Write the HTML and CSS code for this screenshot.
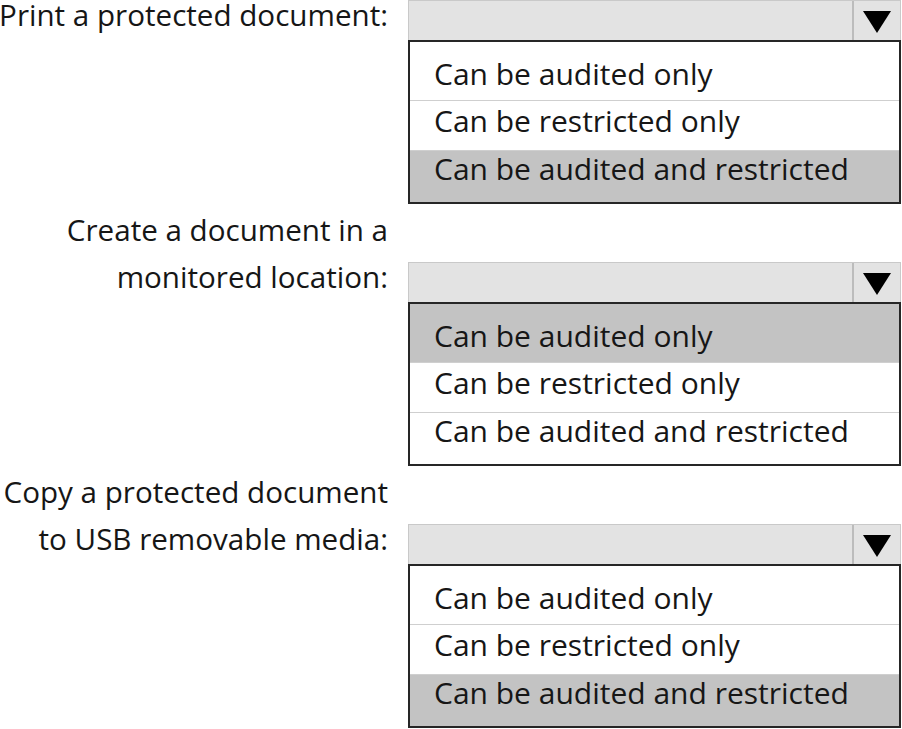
FILE: index.html
```html
<!DOCTYPE html>
<html lang="en">
<head>
    <meta charset="UTF-8">
    <meta name="viewport" content="width=device-width, initial-scale=1.0">
    <title>Endpoint DLP actions</title>
    <link rel="stylesheet" href="styles.css">
</head>
<body>

<div class="form">
    <div class="question">
        <div class="question-label">
            <span>Print a protected document:</span>
        </div>
        <div class="select">
            <span class="select-value"></span>
            <span class="select-arrow">
                <svg width="28" height="22" viewBox="0 0 28 22"><polygon points="0,0 28,0 14,22" fill="#000"/></svg>
            </span>
        </div>
        <ul class="options">
            <li class="option">Can be audited only</li>
            <li class="option">Can be restricted only</li>
            <li class="option selected">Can be audited and restricted</li>
        </ul>
    </div>

    <div class="question">
        <div class="question-label">
            <span>Create a document in a</span>
            <span>monitored location:</span>
        </div>
        <div class="select">
            <span class="select-value"></span>
            <span class="select-arrow">
                <svg width="28" height="22" viewBox="0 0 28 22"><polygon points="0,0 28,0 14,22" fill="#000"/></svg>
            </span>
        </div>
        <ul class="options">
            <li class="option selected">Can be audited only</li>
            <li class="option">Can be restricted only</li>
            <li class="option">Can be audited and restricted</li>
        </ul>
    </div>

    <div class="question">
        <div class="question-label">
            <span>Copy a protected document</span>
            <span>to USB removable media:</span>
        </div>
        <div class="select">
            <span class="select-value"></span>
            <span class="select-arrow">
                <svg width="28" height="22" viewBox="0 0 28 22"><polygon points="0,0 28,0 14,22" fill="#000"/></svg>
            </span>
        </div>
        <ul class="options">
            <li class="option">Can be audited only</li>
            <li class="option">Can be restricted only</li>
            <li class="option selected">Can be audited and restricted</li>
        </ul>
    </div>
</div>

</body>
</html>
```

FILE: styles.css
```css
/* Base */
:root {
    --text-color: #161616;
    --select-bg: #e3e3e3;
    --select-border: #c9c9c9;
    --list-border: #262626;
    --row-line: #cfcfcf;
    --selected-bg: #c3c3c3;
}

body {
    margin: 0;
    background: #ffffff;
    color: var(--text-color);
    font-family: "Open Sans", "Noto Sans", sans-serif;
    font-size: 30px;
    overflow: hidden;
}

.form {
    display: flex;
    flex-direction: column;
    gap: 11px;
}

/* One question: label + dropdown + option list */
.question {
    display: grid;
    grid-template-columns: 388px 493px;
    column-gap: 20px;
}

.question-label {
    grid-column: 1;
    grid-row: 1;
    align-self: end;
    display: flex;
    flex-direction: column;
    align-items: flex-end;
    gap: 17px;
    margin-bottom: 10px;
    font-size: 29.6px;
    line-height: 30px;
    white-space: nowrap;
}

/* Closed dropdown */
.select {
    grid-column: 2;
    grid-row: 1;
    align-self: end;
    display: flex;
    height: 40px;
    box-sizing: border-box;
    background-color: var(--select-bg);
    border: 1px solid var(--select-border);
    border-bottom: none;
}

.select-value {
    flex: 1;
}

.select-arrow {
    width: 48px;
    border-left: 2px solid #bcbcbc;
    display: flex;
    justify-content: center;
    padding-top: 10px;
    box-sizing: border-box;
}

/* Open list */
.options {
    grid-column: 2;
    grid-row: 2;
    list-style: none;
    margin: 0;
    padding: 0;
    height: 164px;
    box-sizing: border-box;
    border: 2px solid var(--list-border);
    display: flex;
    flex-direction: column;
}

.option {
    line-height: 40px;
    padding: 0 24px 9px;
    border-top: 1px solid var(--row-line);
    white-space: nowrap;
}

.option:first-child {
    border-top: none;
    line-height: 42px;
    padding-top: 11px;
    padding-bottom: 5px;
}

.option:last-child {
    flex: 1;
    line-height: 36px;
    padding-bottom: 0;
}

.option.selected {
    background-color: var(--selected-bg);
}
```
